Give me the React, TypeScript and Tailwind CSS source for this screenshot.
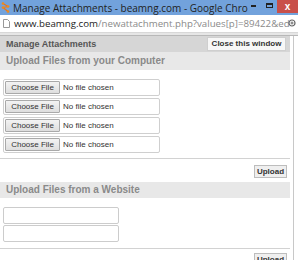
import React from 'react';

const FileRow: React.FC = () => (
  <div className="ml-[3px] flex h-[17px] w-[157px] items-center rounded-[2px] border border-[#cfcfcf] bg-white pl-[1px]">
    <div className="flex h-[13px] w-[55px] items-center justify-center rounded-[1px] border border-[#a9a9a9] bg-gradient-to-b from-[#f3f3f3] to-[#dedede] text-[8px] leading-none text-[#333]">
      Choose File
    </div>
    <span className="ml-[3px] text-[8px] leading-none text-[#333]">No file chosen</span>
  </div>
);

const UploadButton: React.FC = () => (
  <div className="flex justify-end pr-[3px]">
    <div className="flex h-[13px] w-[33px] items-center justify-center border border-[#bdbdbd] bg-[#efefef] text-[8px] font-bold leading-none text-[#333]">
      Upload
    </div>
  </div>
);

const Logo: React.FC = () => (
  <svg width="9" height="11" viewBox="0 0 9 11" className="shrink-0">
    <path d="M2 1.5 L7 4.5 L2 5.5 L7 9.5" stroke="#e8761c" strokeWidth="1.2" fill="none" />
    <circle cx="2" cy="1.5" r="1.3" fill="#f08a1c" />
    <circle cx="7" cy="4.5" r="1.3" fill="#f08a1c" />
    <circle cx="2" cy="5.5" r="1.3" fill="#f08a1c" />
    <circle cx="7" cy="9.5" r="1.3" fill="#f08a1c" />
  </svg>
);

const App: React.FC = () => {
  return (
    <div className="relative h-[260px] w-[298px] overflow-hidden bg-white font-['Liberation_Sans',Arial,sans-serif]">
      {/* window title bar */}
      <div className="flex h-[15px] items-center bg-[#72a2dc]">
        <div className="pl-[1px]">
          <Logo />
        </div>
        <div className="ml-[3px] w-[237px] whitespace-nowrap font-['Open_Sans',sans-serif] text-[10px] leading-none text-[#222]">
          Manage Attachments - beamng.com - Google Chro
        </div>
        <div className="flex h-full flex-1 items-start">
          <div className="ml-[1px] mt-[5px] h-[2px] w-[5px] bg-[#222]" />
          <div className="ml-[10px] mt-[3px] h-[5px] w-[7px] border border-t-2 border-[#222]" />
          <div className="ml-auto flex h-[13px] w-[21px] items-center justify-center bg-[#c9504a] text-[10px] font-bold leading-none text-white">
            x
          </div>
        </div>
      </div>

      {/* address bar */}
      <div className="flex h-[18px] items-center border-b border-[#d8d8d8] bg-white">
        <svg width="7" height="9" viewBox="0 0 7 9" className="ml-[3px] shrink-0">
          <path d="M0.5 0.5 H4.5 L6.5 2.5 V8.5 H0.5 Z" stroke="#999" fill="white" />
        </svg>
        <div className="ml-[4px] w-[273px] whitespace-nowrap font-['Open_Sans',sans-serif] text-[9.7px] leading-none">
          <span className="text-[#222]">www.beamng.com</span>
          <span className="text-[#8a8a8a]">/newattachment.php?values[p]=89422&amp;ed</span>
        </div>
        <svg width="9" height="9" viewBox="0 0 9 9" className="ml-[1px] shrink-0">
          <circle cx="4" cy="4" r="3" stroke="#666" strokeWidth="1.2" fill="none" />
          <path d="M2.5 4 H5.5 M4 2.5 V5.5" stroke="#666" strokeWidth="1" />
        </svg>
      </div>
      <div className="h-[3px] border-b border-[#b8b8b8] bg-[#e6e6e6]" />

      {/* page */}
      <div className="flex">
        <div className="w-[290px]">
          <div className="flex h-[16px] items-start justify-between bg-[#d6d6d6]">
            <span className="pl-[6px] pt-[4px] text-[9px] font-bold leading-none text-[#555]">Manage Attachments</span>
            <div className="mr-[4px] mt-[1px] flex h-[14px] w-[79px] items-center justify-center border border-[#cfcfcf] bg-[#f7f7f7] text-[8px] font-bold leading-none text-[#333]">
              Close this window
            </div>
          </div>
          <div className="flex h-[18px] items-center bg-[#e8e8e8] pl-[6px] text-[10px] font-bold leading-none text-[#8a8a8a]">
            Upload Files from your Computer
          </div>

          <div className="mt-[9px] flex flex-col gap-[2px]">
            <FileRow />
            <FileRow />
            <FileRow />
            <FileRow />
          </div>

          <div className="mt-[5px] border-t border-[#d2d2d2]" />
          <div className="mt-[6px]">
            <UploadButton />
          </div>

          <div className="mt-[4px] flex h-[16px] items-center bg-[#e8e8e8] pl-[6px] text-[10px] font-bold leading-none text-[#8a8a8a]">
            Upload Files from a Website
          </div>

          <div className="mt-[9px] flex flex-col gap-[1px]">
            <div className="ml-[3px] h-[17px] w-[116px] rounded-[2px] border border-[#cccccc] bg-white" />
            <div className="ml-[3px] h-[17px] w-[116px] rounded-[2px] border border-[#cccccc] bg-white" />
          </div>

          <div className="mt-[6px] border-t border-[#d2d2d2]" />
          <div className="mt-[4px]">
            <UploadButton />
          </div>
        </div>
        <div className="w-[3px]" />
        <div className="h-[230px] flex-1 border-l border-[#c8c8c8]" />
      </div>
    </div>
  );
};

export default App;
